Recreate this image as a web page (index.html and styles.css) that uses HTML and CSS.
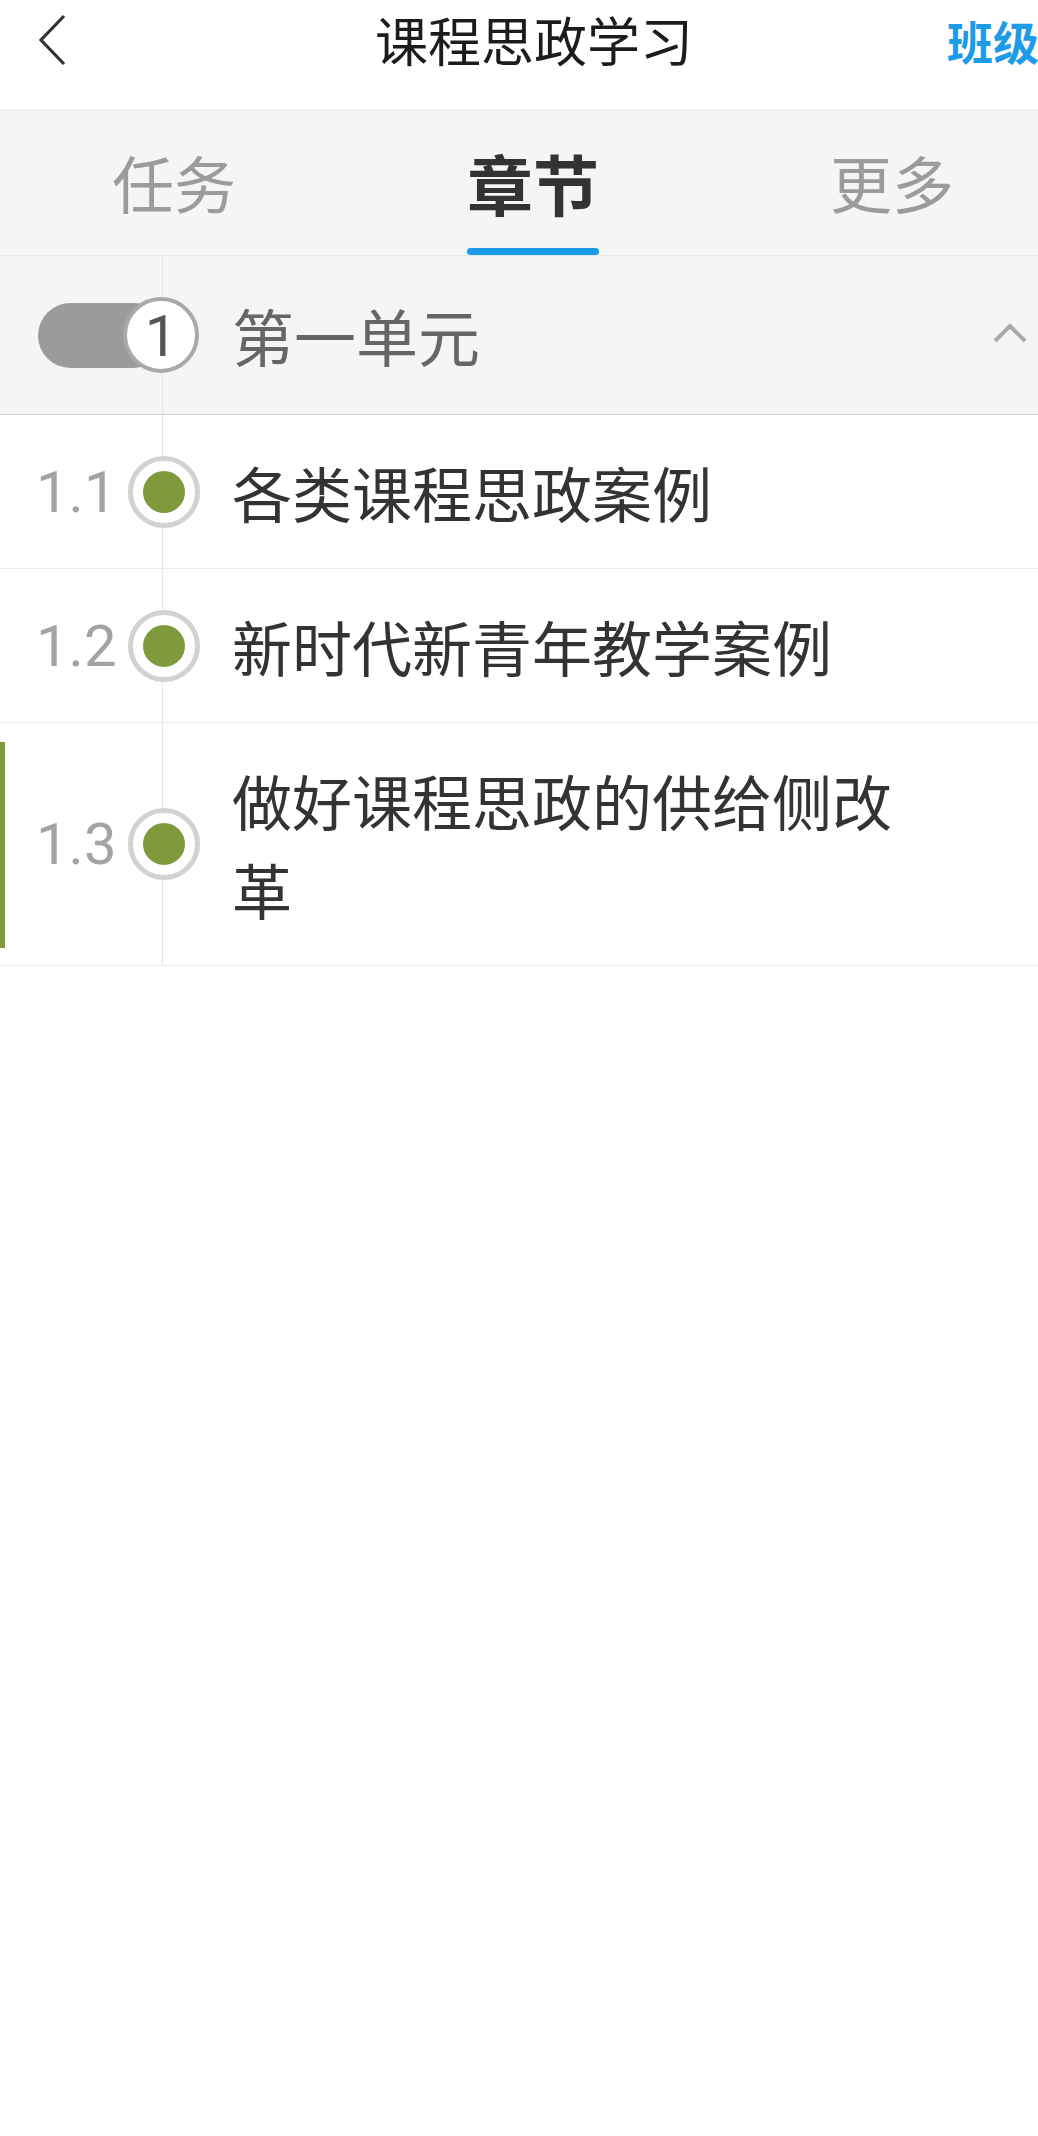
FILE: index.html
```html
<!DOCTYPE html>
<html lang="zh-CN">
<head>
<meta charset="utf-8">
<title>课程思政学习</title>
<link rel="stylesheet" href="styles.css">
</head>
<body>
<div class="app">
  <header class="topbar">
    <div class="back">
      <svg class="back-icon" width="30" height="52" viewBox="0 0 30 52"><polyline points="26,2 3,26 26,50" fill="none" stroke="#333" stroke-width="3.2" stroke-linejoin="miter"/></svg>
    </div>
    <h1 class="title">课程思政学习</h1>
    <div class="spacer"></div>
    <span class="class-link">班级</span>
  </header>

  <nav class="tabs">
    <div class="tab">任务</div>
    <div class="tab active">章节<span class="indicator"></span></div>
    <div class="tab">更多</div>
  </nav>

  <section class="chapter">
    <div class="unit-row">
      <div class="toggle">
        <span class="pill"></span>
        <span class="knob">1</span>
      </div>
      <div class="unit-title">第一单元</div>
      <svg class="chevron" width="34" height="20" viewBox="0 0 34 20"><polyline points="2,18 17,3 32,18" fill="none" stroke="#aaaaaa" stroke-width="4"/></svg>
    </div>

    <div class="item">
      <div class="gutter"><span class="num">1.1</span><span class="dot"></span></div>
      <div class="item-title">各类课程思政案例</div>
    </div>
    <div class="item">
      <div class="gutter"><span class="num">1.2</span><span class="dot"></span></div>
      <div class="item-title">新时代新青年教学案例</div>
    </div>
    <div class="item current">
      <div class="gutter"><span class="num">1.3</span><span class="dot"></span></div>
      <div class="item-title">做好课程思政的供给侧改革</div>
    </div>
  </section>
</div>
</body>
</html>
```

FILE: styles.css
```css
* { box-sizing: border-box; }

html, body {
  margin: 0;
  padding: 0;
  background: #ffffff;
}

body {
  font-family: "Noto Sans CJK SC", "Noto Sans", sans-serif;
  color: #333;
}

.app {
  width: 1038px;
  overflow: hidden;
}

/* Top bar */
.topbar {
  display: flex;
  align-items: center;
  height: 111px;
  padding-bottom: 31px;
  border-bottom: 1px solid #e9e9ea;
  background: #fff;
}

.back {
  width: 375px;
  flex: none;
  display: flex;
  align-items: center;
  padding-left: 38px;
}

.back-icon { display: block; }

.title {
  margin: 0;
  font-size: 53px;
  font-weight: 400;
  line-height: 1;
  color: #1c1c1c;
  white-space: nowrap;
}

.spacer { flex: 1; }

.class-link {
  font-size: 46px;
  line-height: 1;
  font-weight: 700;
  color: #1d9be6;
  white-space: nowrap;
  margin-right: -1px;
}

/* Tabs */
.tabs {
  display: flex;
  justify-content: space-between;
  height: 145px;
  padding: 0 84px 0 112px;
  background: #f4f5f7;
  border-bottom: 1px solid #e6e7e9;
}

.tab {
  position: relative;
  display: flex;
  align-items: center;
  padding-bottom: 2px;
  font-size: 62px;
  line-height: 1;
  color: #9b9b9b;
}

.tab.active {
  font-size: 66px;
  font-weight: 700;
  color: #333;
}

.indicator {
  position: absolute;
  left: 0;
  right: 0;
  bottom: 0;
  height: 7px;
  border-radius: 4px;
  background: #1a9be8;
}

/* Chapter list */
.chapter {
  position: relative;
}

.chapter::before {
  content: "";
  position: absolute;
  left: 162px;
  top: 0;
  bottom: 0;
  width: 1px;
  background: #e6e6e6;
  z-index: 1;
}

.unit-row {
  display: flex;
  align-items: center;
  height: 159px;
  background: #f4f5f7;
  border-bottom: 1px solid #d3d3d3;
}

.toggle {
  position: relative;
  flex: none;
  width: 161px;
  height: 78px;
  margin-left: 38px;
  z-index: 2;
}

.pill {
  position: absolute;
  left: 0;
  top: 7px;
  width: 128px;
  height: 65px;
  border-radius: 33px;
  background: #9b9b9b;
}

.knob {
  position: absolute;
  right: 0;
  top: 1px;
  width: 76px;
  height: 76px;
  border-radius: 50%;
  background: #fff;
  border: 4px solid #a9a9a9;
  display: flex;
  align-items: center;
  justify-content: center;
  font-family: Roboto, "Liberation Sans", sans-serif;
  font-size: 58px;
  line-height: 1;
  color: #555;
  padding-top: 2px;
}

.unit-title {
  flex: 1;
  margin-left: 33px;
  font-size: 62px;
  line-height: 1;
  color: #666;
  padding-top: 0;
}

.chevron {
  flex: none;
  margin-right: 11px;
  margin-top: -4px;
}

.item {
  position: relative;
  display: flex;
  align-items: center;
  padding: 32px 0;
  border-bottom: 1px solid #ececec;
}

.item.current::before {
  content: "";
  position: absolute;
  left: 0;
  top: 19px;
  bottom: 17px;
  width: 5px;
  background: #7e9a3c;
}

.gutter {
  flex: none;
  width: 232px;
  display: flex;
  align-items: center;
}

.num {
  flex: none;
  width: 128px;
  padding-left: 36px;
  font-family: Roboto, "Liberation Sans", sans-serif;
  font-size: 58px;
  line-height: 1;
  color: #a3a3a3;
  white-space: nowrap;
}

.dot {
  position: relative;
  z-index: 2;
  flex: none;
  width: 72px;
  height: 72px;
  border-radius: 50%;
  background: #7e9a3c;
  border: 15px solid #fff;
  outline: 5px solid #d2d2d2;
  outline-offset: -5px;
}

.item-title {
  flex: 1;
  padding-right: 120px;
  font-size: 60px;
  line-height: 89px;
  color: #333;
}
```
